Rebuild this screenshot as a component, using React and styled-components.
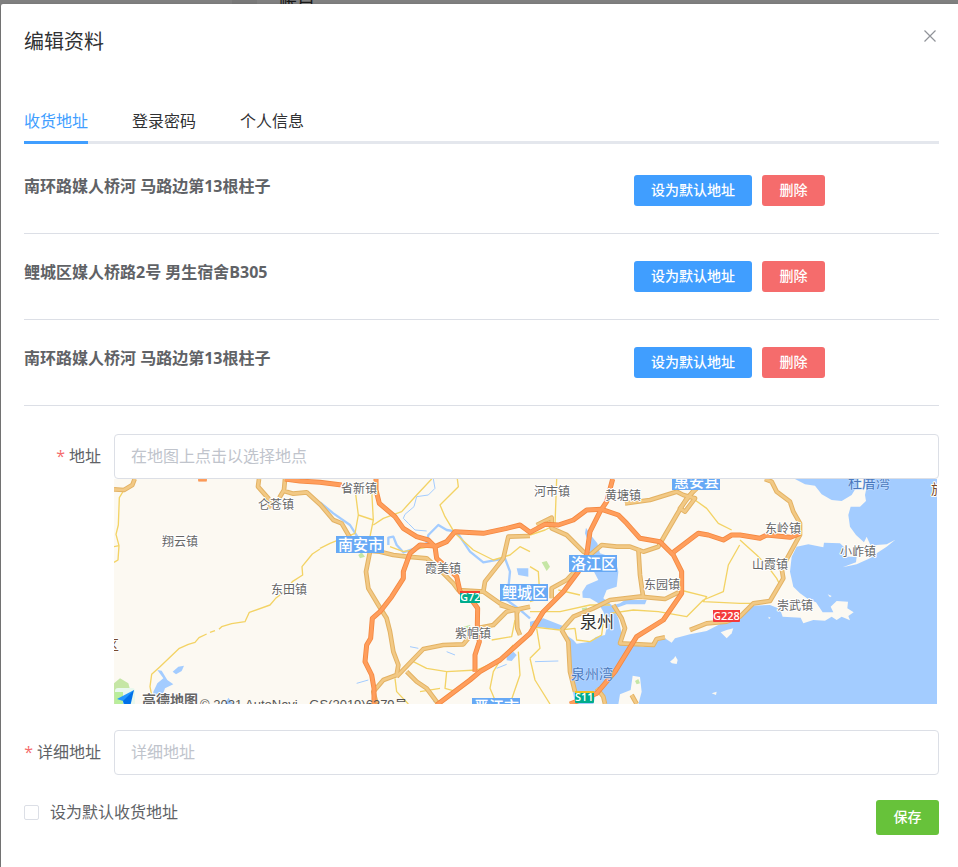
import React, { useState } from "react";
import styled, { createGlobalStyle } from "styled-components";

const GlobalStyle = createGlobalStyle`
  *, *::before, *::after { box-sizing: border-box; }
  body {
    margin: 0;
    background: #808080;
    color: #606266;
    font: 16px/24px "Open Sans", "Noto Sans CJK SC", sans-serif;
  }
  button, input { font-family: inherit; }
`;

const Page = styled.div`
  display: flex;
  flex-direction: column;
  min-height: 100vh;
`;

const Backdrop = styled.div`
  display: flex;
  align-items: center;
  height: 4px;
  padding-left: 232px;
  overflow: hidden;
  background: #808080;
`;

const BackdropBlock = styled.span`
  flex: none;
  width: 25px;
  height: 4px;
  margin-right: 22px;
  background: #797979;
`;

const BackdropText = styled.span`
  flex: none;
  font-size: 18px;
  line-height: 24px;
  color: #191919;
`;

const Dialog = styled.section`
  flex: 1;
  margin-left: 1px;
  padding: 24px 19px 32px 23px;
  background: #fff;
  border-radius: 2px 0 0 0;
  box-shadow: 0 1px 3px rgba(0, 0, 0, 0.3);
`;

const Header = styled.header`
  display: flex;
  justify-content: space-between;
  align-items: flex-start;
`;

const Title = styled.h1`
  margin: 0;
  font-size: 20px;
  line-height: 28px;
  font-weight: 400;
  color: #303133;
`;

const CloseButton = styled.button`
  display: flex;
  padding: 2px 3px;
  border: 0;
  background: none;
  color: #909399;
  cursor: pointer;
`;

const TabList = styled.nav`
  display: flex;
  gap: 44px;
  margin-top: 53px;
  box-shadow: inset 0 -3px #e4e7ed;
`;

const Tab = styled.button`
  height: 35px;
  padding: 0 0 8px;
  border: 0;
  border-bottom: 3px solid ${(p) => (p.$active ? "#409eff" : "transparent")};
  background: none;
  color: ${(p) => (p.$active ? "#409eff" : "#303133")};
  font-size: 16px;
  line-height: 24px;
  white-space: nowrap;
  cursor: pointer;
`;

const AddressList = styled.ul`
  margin: 4px 0 28px;
  padding: 0;
  list-style: none;
`;

const AddressRow = styled.li`
  display: grid;
  grid-template-columns: 2fr 1fr;
  align-items: start;
  padding: 27px 0;
  border-bottom: 1px solid #dcdfe6;
`;

const AddressText = styled.strong`
  line-height: 22px;
  font-weight: 700;
`;

const Actions = styled.div`
  display: flex;
  gap: 10px;
`;

const tones = { primary: "#409eff", danger: "#f56c6c", success: "#67c23a" };

const Button = styled.button`
  min-width: 63px;
  height: ${(p) => (p.$tall ? 35 : 31)}px;
  padding: 0 17px 2px;
  border: 0;
  border-radius: 3px;
  background: ${(p) => tones[p.$tone]};
  color: #fff;
  font-size: 14px;
  line-height: 20px;
  font-weight: 500;
  white-space: nowrap;
  cursor: pointer;
`;

const Field = styled.div`
  display: grid;
  grid-template-columns: 90px 1fr;
  margin-bottom: 26px;
`;

const Label = styled.label`
  padding-right: 13px;
  line-height: 44px;
  text-align: right;
  white-space: nowrap;

  &::before {
    content: "*";
    margin-right: 4px;
    color: #f56c6c;
  }
`;

const TextInput = styled.input`
  display: block;
  width: 100%;
  height: 45px;
  padding: 0 16px 2px;
  border: 1px solid #dcdfe6;
  border-radius: 4px;
  background: #fff;
  color: #606266;
  font-size: 16px;

  &::placeholder { color: #c0c4cc; opacity: 1; }
`;

const MapFrame = styled.div`
  height: 225px;
  margin-right: 2px;
  overflow: hidden;
  background: #fcf9f2;
`;

const MapDrawing = styled.svg`
  display: block;
  width: 100%;
  height: 100%;
`;

const Town = styled.text`
  font: 400 12px "Noto Sans CJK SC", sans-serif;
  fill: #666;
  stroke: #fff;
  stroke-width: 2px;
  stroke-linejoin: round;
  paint-order: stroke;
`;

const City = styled(Town)`
  font-size: 17px;
  fill: #333;
`;

const Bay = styled(Town)`
  font-size: 14px;
  fill: #4a79bd;
  stroke: #c5dfff;
  stroke-width: 1px;
`;

const District = styled.text`
  font: 500 15px "Noto Sans CJK SC", sans-serif;
  fill: #fff;
`;

const RoadNumber = styled.text`
  font: 600 11px "Open Sans", sans-serif;
  fill: #fff;
`;

const Region = styled(Town)`
  font-size: 14px;
  fill: #7b4a2b;
`;

const Brand = styled(Town)`
  font-size: 14px;
  font-weight: 700;
  fill: #666;
`;

const Copyright = styled.text`
  font: 13px "Liberation Sans", "Noto Sans CJK SC", sans-serif;
  fill: #555;
`;

const Footer = styled.div`
  display: flex;
  justify-content: space-between;
  align-items: flex-start;
  margin-top: -1px;
`;

const CheckLabel = styled.label`
  display: flex;
  align-items: center;
  gap: 11px;
  line-height: 24px;
  cursor: pointer;
`;

const Checkbox = styled.input`
  appearance: none;
  width: 15px;
  height: 15px;
  margin: 0;
  border: 1px solid #dcdfe6;
  border-radius: 2px;
  background: #fff;

  &:checked { background: #409eff; border-color: #409eff; }
`;

const tabs = ["收货地址", "登录密码", "个人信息"];

const addresses = [
  "南环路媒人桥河 马路边第13根柱子",
  "鲤城区媒人桥路2号 男生宿舍B305",
  "南环路媒人桥河 马路边第13根柱子",
];

const seas = [
  "M1355 470L1390 495 1400 506 1440 500 1458 486 1485 480 1492 450 1480 410 1465 385 1440 370 1418 368 1417 350 1430 330 1465 315 1452 290 1430 290 1440 215 1425 175 1428 158 1440 178 1462 205 1470 235 1515 250 1525 290 1520 335 1490 345 1480 370 1505 390 1525 430 1535 475 1527 505 1600 515 1665 490 1685 503 1695 490 1740 478 1790 468 1835 445 1850 430 1880 440 1905 412 1930 392 1980 390 2010 402 2018 425 2072 428 2080 445 2110 435 2145 437 2165 425 2180 435 2195 425 2220 436 2215 423 2231 412 2212 400 2214 380 2180 378 2162 395 2170 412 2138 412 2118 382 2095 373 2070 355 2050 335 2040 290 2045 245 2060 215 2095 208 2140 217 2142 203 2190 205 2208 222 2200 245 2240 245 2238 262 2198 277 2240 268 2280 250 2300 235 2330 215 2356 194 2330 208 2300 210 2285 218 2270 185 2262 202 2238 180 2220 155 2215 120 2222 95 2250 95 2268 78 2265 60 2275 12 2482 12 2482 688 1585 688 1595 650 1590 606 1568 602 1562 645 1530 658 1525 688 1490 688 1480 660 1460 645 1450 688 1395 688 1380 590 1375 510Z",
  "M2055 12L2085 28 2115 32 2135 58 2165 75 2195 78 2225 60 2240 35 2245 12Z",
  "M130 650L142 625 160 610 142 585 155 587 172 615 190 628 165 640 158 660 130 665Z",
  "M188 590L205 575 222 572 215 588 198 598Z",
  "M1220 280L1255 280 1255 305 1225 300Z",
  "M1260 440L1300 430 1365 455 1360 465 1290 457 1260 455Z",
  "M1490 395L1530 385 1545 375 1610 375 1605 388 1550 388 1510 402Z",
  "M1190 545L1210 530 1220 540 1205 558 1190 556Z",
  "M345 687L355 668 370 687Z",
];

const islands = [
  "M1680 560L1692 550 1696 543 1703 555 1700 567 1686 565Z",
  "M1832 472L1850 465 1870 460 1865 475 1850 490Z",
  "M1805 655L1820 650 1818 660Z",
  "M2153 358L2165 363 2160 367Z",
  "M1975 425L1982 428 1977 432Z",
];

const rivers = [
  "M630 82L670 115 720 150 742 185",
  "M950 205L955 180 985 150 1010 165 1040 170 1080 230 1120 262 1185 250 1200 290 1195 340 1190 375 1225 400 1260 430",
  "M835 210L835 188 850 185 860 210 880 232 930 215 950 205",
];

const brooks = [
  "M970 12L975 40 955 60 920 65 912 95 885 118 880 130 895 145 915 165 950 168",
  "M740 625L775 615M1010 530L1035 540M1160 580L1190 568M1275 560L1345 558M900 515L925 520M970 680L1010 675",
];

const lanes = [
  "M42 45L28 68 25 150 18 178 27 212 24 255 12 262M12 215L27 212",
  "M630 222L607 237 576 275 578 300 547 320 530 345 497 370 480 390 418 412 405 440 365 446 335 455 327 463M315 467L300 472M290 477L267 488 255 502 235 508 208 520 150 575 125 598 120 635 130 687",
  "M735 42L745 120 790 135 780 185M745 120L735 175 660 205 630 220M785 45L790 135M790 150L820 130 875 110 920 60 965 12",
  "M1042 12L1045 35 990 90 1005 125 1035 175 1090 225 1150 255 1200 240 1230 215 1260 230",
  "M840 215L880 230 960 215",
  "M910 560L950 580 1010 590 1100 585 1170 555 1210 510M1010 590L1005 640 1040 650 1090 600M1180 540L1150 590 1140 640 1160 687",
  "M855 610L860 650 895 687M930 650L990 640M1225 530L1230 600 1200 687",
  "M1260 180L1305 165 1335 150 1340 12M1260 275L1285 290 1290 370 1260 380M1345 345L1410 360",
  "M1260 410L1350 410 1440 390 1500 390M1260 455L1350 465 1395 460 1400 495 1440 500 1475 480 1480 440",
  "M1500 415L1570 405 1645 410 1730 425 1780 375 1840 350 1855 270 1889 210M1710 345L1790 365 1780 380 1890 385 1930 385",
  "M1755 75L1790 100 1825 145 1865 165M1890 195L1940 240 1970 270 2000 310 2010 330",
  "M1260 550L1290 520 1280 460M1260 550L1275 615 1320 687M1145 495L1205 485 1215 435",
];

const avenues = [
  "M12 43L42 45 67 30 74 12",
  "M447 12L444 35 475 70 482 100M525 12L522 45 508 68M522 48L550 56 590 52 632 90 670 135 695 145 730 205 750 225 810 230 850 240 890 245 950 250 995 290 1030 325 1045 345 1120 350 1170 385 1230 410",
  "M780 230L768 290 775 340 805 390 830 430 840 470 850 530 865 570 860 600 820 615 790 650 800 687",
  "M860 605L940 522 1000 510 1060 508 1100 460 1150 450 1190 410 1260 395",
  "M890 590L920 620 950 640 985 687",
  "M1120 350L1125 320 1180 250 1195 185 1260 183",
  "M1170 390L1220 405 1222 460 1230 480",
  "M1280 150L1325 128 1325 160 1370 180 1420 230 1440 240 1475 210 1520 215 1560 215 1600 230 1645 215 1665 180 1700 120 1730 70 1750 50 1790 12",
  "M1545 85L1620 75 1700 50 1720 60 1755 70 1725 110 1710 100 1760 35",
  "M1440 240L1370 315 1325 340 1325 370",
  "M1585 220L1590 300 1600 370",
  "M1355 465L1390 425 1450 400 1500 375 1590 365 1665 372 1710 350",
  "M1355 465L1375 500 1380 590 1395 650",
  "M1510 390L1535 430 1545 460 1530 505 1630 510 1640 492 1665 487",
  "M1740 465L1790 445 1850 440 1890 425 1930 385 1980 378 2020 310 2015 280 2070 180 2070 145 2050 110 2040 80 2000 50 1985 20 1965 12",
  "M1460 640L1480 665 1485 687M1565 660L1580 687",
];

const highways = [
  "M265 12L290 12M525 12L570 18 630 22 695 30",
  "M798 12L798 45 808 85 855 125 880 160 920 185 955 195 975 215 980 250 1040 305 1050 350 1085 375 1103 400 1102 450 1108 500 1095 540 1095 590",
  "M975 215L1010 200 1035 170 1120 175 1190 160 1230 150 1260 172 1305 148 1345 150 1390 135 1430 105 1475 103 1525 120 1550 145 1590 190 1650 200 1690 240 1715 290 1715 355 1660 435 1580 485 1515 590 1460 655 1380 687",
  "M975 213L930 210 900 235 880 290 880 310 845 365 810 410 787 430 782 490 770 510 765 560 785 600 792 640 792 687",
  "M980 690L1080 615 1110 590 1170 555 1260 475 1300 410 1360 350 1405 290 1430 240 1440 170 1470 110 1490 80 1508 12",
  "M1690 232L1745 190 1765 175 1795 180 1840 195 1865 180 1890 180 1950 190 1970 180 2040 187 2070 175",
];

const parks = [
  "M12 625L30 610 55 625 62 650 40 687 12 687Z",
  "M745 240L755 232 765 245 750 250Z",
  "M1295 262L1310 258 1320 275 1310 288Z",
  "M1415 400L1430 397 1435 410 1420 415Z",
  "M1060 455L1080 450 1085 465 1065 465Z",
  "M1575 618L1585 612 1590 625 1580 628Z",
];

const towns = [
  [144, 30, "仑苍镇"], [227, 14, "省新镇"], [48, 67, "翔云镇"], [157, 115, "东田镇"],
  [311, 94, "霞美镇"], [341, 159, "紫帽镇"], [420, 17, "河市镇"], [491, 21, "黄塘镇"],
  [530, 110, "东园镇"], [651, 54, "东岭镇"], [638, 90, "山霞镇"], [663, 131, "崇武镇"],
  [726, 77, "小岞镇"],
];

const districts = [
  [222, 57, "南安市"], [386, 105, "鲤城区"], [455, 76, "洛江区"],
  [558, -6, "惠安县"], [358, 219, "晋江市"],
];

const shields = [
  [346, 112, 20, "#00ac8c", "#f04030", "G72"],
  [599, 131, 27, "#f43b3b", "#f43b3b", "G228"],
  [461, 212, 19, "#00ac8c", "#f0c020", "S11"],
];

function Strokes({ paths, color, width }) {
  return (
    <g fill="none" stroke={color} strokeWidth={width} strokeLinejoin="round">
      {paths.map((d) => <path key={d} d={d} />)}
    </g>
  );
}

function Shapes({ paths, color }) {
  return <g fill={color}>{paths.map((d) => <path key={d} d={d} />)}</g>;
}

function CityMap() {
  return (
    <MapFrame>
      <MapDrawing viewBox="0 0 823 225" preserveAspectRatio="xMidYMid slice" role="img" aria-label="泉州地图">
        <g transform="scale(0.33333) translate(-12 -12)">
          <Shapes paths={seas} color="#a3ccff" />
          <Shapes paths={islands} color="#fcf9f2" />
          <Shapes paths={parks} color="#c5e6a5" />
          <Strokes paths={rivers} color="#a3ccff" width={7} />
          <Strokes paths={brooks} color="#a3ccff" width={3} />
          <Strokes paths={lanes} color="#f3d365" width={4} />
          <Strokes paths={avenues} color="#e3b263" width={14} />
          <Strokes paths={avenues} color="#f2c985" width={8} />
          <Strokes paths={highways} color="#f48840" width={15} />
          <Strokes paths={highways} color="#ff9e5c" width={10} />
        </g>
        {towns.map(([x, y, name]) => <Town key={name} x={x} y={y}>{name}</Town>)}
        <City x="466" y="149">泉州</City>
        <Bay x="457" y="200">泉州湾</Bay>
        <Bay x="734" y="9">杜厝湾</Bay>
        <Region x="817" y="15">旅</Region>
        <Region x="-9" y="171">区</Region>
        {districts.map(([x, y, name]) => (
          <g key={name}>
            <rect x={x} y={y} width="48" height="17" fill="#67a9f5" />
            <District x={x + 2} y={y + 14}>{name}</District>
          </g>
        ))}
        {shields.map(([x, y, width, fill, cap, name]) => (
          <g key={name}>
            <rect x={x} y={y} width={width} height="12" rx="1" fill={fill} />
            <rect x={x} y={y} width={width} height="2" fill={cap} />
            <RoadNumber x={x} y={y + 10}>{name}</RoadNumber>
          </g>
        ))}
        <rect x="1" y="209" width="20" height="20" rx="3" fill="#e8f8ee" />
        <path d="M1 213h8v12H1z" fill="#b9ee9c" />
        <path d="M20 211L3 220l6 2 1 6z" fill="#2196ff" />
        <path d="M20 211L9 222l3 6h4z" fill="#0070e8" />
        <Brand x="28" y="226">高德地图</Brand>
        <Copyright x="86" y="230">© 2021 AutoNavi - GS(2019)6379号</Copyright>
      </MapDrawing>
    </MapFrame>
  );
}

export default function App() {
  const [active, setActive] = useState(tabs[0]);

  return (
    <>
      <GlobalStyle />
      <Page>
        <Backdrop aria-hidden="true">
          <BackdropBlock />
          <BackdropText>账户</BackdropText>
        </Backdrop>
        <Dialog role="dialog" aria-labelledby="dialog-title">
          <Header>
            <Title id="dialog-title">编辑资料</Title>
            <CloseButton type="button" aria-label="关闭">
              <svg width="12" height="12" viewBox="0 0 12 12" stroke="currentColor" strokeWidth="1.2">
                <path d="M.5.5l11 11M11.5.5l-11 11" />
              </svg>
            </CloseButton>
          </Header>
          <TabList>
            {tabs.map((name) => (
              <Tab key={name} type="button" $active={name === active} onClick={() => setActive(name)}>
                {name}
              </Tab>
            ))}
          </TabList>
          <AddressList>
            {addresses.map((address, index) => (
              <AddressRow key={index}>
                <AddressText>{address}</AddressText>
                <Actions>
                  <Button type="button" $tone="primary">设为默认地址</Button>
                  <Button type="button" $tone="danger">删除</Button>
                </Actions>
              </AddressRow>
            ))}
          </AddressList>
          <form onSubmit={(event) => event.preventDefault()}>
            <Field>
              <Label htmlFor="place">地址</Label>
              <div>
                <TextInput id="place" placeholder="在地图上点击以选择地点" />
                <CityMap />
              </div>
            </Field>
            <Field>
              <Label htmlFor="detail">详细地址</Label>
              <TextInput id="detail" placeholder="详细地址" />
            </Field>
            <Footer>
              <CheckLabel>
                <Checkbox type="checkbox" />
                设为默认收货地址
              </CheckLabel>
              <Button type="submit" $tone="success" $tall>保存</Button>
            </Footer>
          </form>
        </Dialog>
      </Page>
    </>
  );
}
